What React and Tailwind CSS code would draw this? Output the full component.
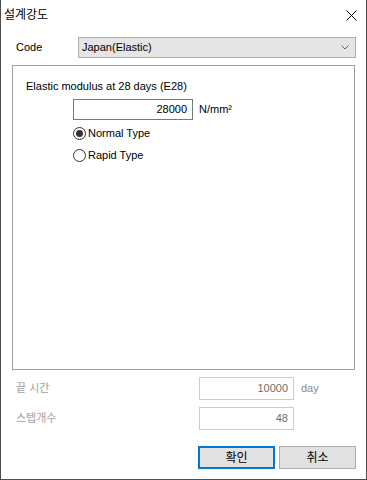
import { useState } from "react";

const font = { fontFamily: '"Liberation Sans", "Noto Sans CJK KR", sans-serif' };

const Radio = ({ checked, label, onClick }) => (
  <button type="button" onClick={onClick} className="flex h-[20px] items-center gap-[2px] text-[11px] text-black">
    <span className="flex h-[13px] w-[13px] items-center justify-center rounded-full border border-[#333333] bg-white">
      {checked && <span className="h-[7px] w-[7px] rounded-full bg-[#333333]" />}
    </span>
    {label}
  </button>
);

export default function App() {
  const [type, setType] = useState("normal");

  return (
    <div style={font} className="flex h-[480px] w-[367px] flex-col border-x border-b border-[#4d4d4d] bg-white">
      <div className="flex h-[30px] shrink-0 items-center justify-between pl-[3px] pr-[9px]">
        <span className="text-[12px] text-black">설계강도</span>
        <svg width="11" height="11" viewBox="0 0 11 11" className="mt-[1px]">
          <path d="M0.5 0.5 L10.5 10.5 M10.5 0.5 L0.5 10.5" stroke="#000" strokeWidth="1" />
        </svg>
      </div>

      <div className="mt-[7px] flex items-center pl-[15px] pr-[10px]">
        <span className="w-[62px] text-[11px] text-black">Code</span>
        <div className="flex h-[21px] flex-1 items-center justify-between border border-[#adadad] bg-[#e5e5e5] pl-[3px] pr-[6px] text-[11px] text-black">
          <span>Japan(Elastic)</span>
          <svg width="8" height="5" viewBox="0 0 8 5">
            <path d="M0.5 0.5 L4 4 L7.5 0.5" fill="none" stroke="#606060" strokeWidth="1" />
          </svg>
        </div>
      </div>

      <div className="mx-[11px] mt-[7px] flex h-[305px] flex-col border border-[#a0a0a0] pl-[13px] pt-[13px]">
        <span className="text-[11px] leading-[14px] text-black">Elastic modulus at 28 days (E28)</span>
        <div className="ml-[47px] mt-[6px] flex flex-col">
          <div className="flex items-center gap-[6px]">
            <div className="flex h-[21px] w-[120px] items-center justify-end border border-[#7a7a7a] pr-[5px] text-[11px] text-black">
              28000
            </div>
            <span className="text-[11px] text-black">N/mm²</span>
          </div>
          <div className="mt-[3px] flex flex-col gap-[2px]">
            <Radio checked={type === "normal"} label="Normal Type" onClick={() => setType("normal")} />
            <Radio checked={type === "rapid"} label="Rapid Type" onClick={() => setType("rapid")} />
          </div>
        </div>
      </div>

      <div className="mt-[7px] flex flex-col gap-[7px] pl-[15px]">
        <div className="flex items-center">
          <span className="w-[183px] text-[11px] text-[#a0a0a0]">끝 시간</span>
          <div className="flex h-[23px] w-[95px] items-center justify-end border border-[#cccccc] pr-[5px] text-[11px] text-[#6d6d6d]">
            10000
          </div>
          <span className="ml-[7px] text-[11px] text-[#8a8a8a]">day</span>
        </div>
        <div className="flex items-center">
          <span className="w-[183px] text-[11px] text-[#a0a0a0]">스텝개수</span>
          <div className="flex h-[23px] w-[95px] items-center justify-end border border-[#cccccc] pr-[5px] text-[11px] text-[#6d6d6d]">
            48
          </div>
        </div>
      </div>

      <div className="mt-[16px] flex justify-end gap-[4px] pr-[10px]">
        <button type="button" className="h-[23px] w-[77px] border-2 border-[#0078d7] bg-[#e1e1e1] text-[12px] text-black">
          확인
        </button>
        <button type="button" className="h-[23px] w-[77px] border border-[#adadad] bg-[#e1e1e1] text-[12px] text-black">
          취소
        </button>
      </div>
    </div>
  );
}
